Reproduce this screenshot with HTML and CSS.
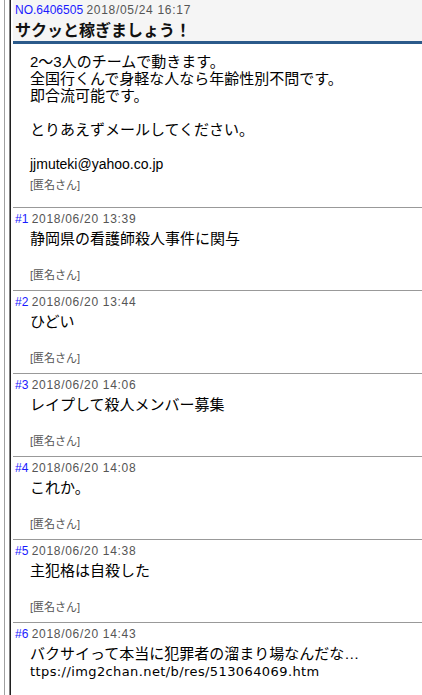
FILE: index.html
```html
<!DOCTYPE html>
<html lang="ja">
<head>
<meta charset="utf-8">
<title>サクッと稼ぎましょう！</title>
<link rel="stylesheet" href="styles.css">
</head>
<body>
<div class="frame">
  <div class="inner">
    <div class="content">
      <div class="head">
        <div class="meta"><span class="no">NO.6406505</span> <span class="date">2018/05/24 16:17</span></div>
        <h1 class="title">サクッと稼ぎましょう！</h1>
      </div>
      <div class="main-body">
        <div class="text">2〜3人のチームで動きます。<br>全国行くんで身軽な人なら年齢性別不問です。<br>即合流可能です。<br><br>とりあえずメールしてください。<br><br><span class="email">jjmuteki@yahoo.co.jp</span></div>
        <div class="name">[匿名さん]</div>
      </div>

      <div class="post">
        <div class="meta"><span class="no">#1</span> <span class="date">2018/06/20 13:39</span></div>
        <div class="text">静岡県の看護師殺人事件に関与<br><br></div>
        <div class="name">[匿名さん]</div>
      </div>
      <div class="post">
        <div class="meta"><span class="no">#2</span> <span class="date">2018/06/20 13:44</span></div>
        <div class="text">ひどい<br><br></div>
        <div class="name">[匿名さん]</div>
      </div>
      <div class="post">
        <div class="meta"><span class="no">#3</span> <span class="date">2018/06/20 14:06</span></div>
        <div class="text">レイプして殺人メンバー募集<br><br></div>
        <div class="name">[匿名さん]</div>
      </div>
      <div class="post">
        <div class="meta"><span class="no">#4</span> <span class="date">2018/06/20 14:08</span></div>
        <div class="text">これか。<br><br></div>
        <div class="name">[匿名さん]</div>
      </div>
      <div class="post">
        <div class="meta"><span class="no">#5</span> <span class="date">2018/06/20 14:38</span></div>
        <div class="text">主犯格は自殺した<br><br></div>
        <div class="name">[匿名さん]</div>
      </div>
      <div class="post">
        <div class="meta"><span class="no">#6</span> <span class="date">2018/06/20 14:43</span></div>
        <div class="text">バクサイって本当に犯罪者の溜まり場なんだな…</div>
        <div class="url">ttps://img2chan.net/b/res/513064069.htm</div>
      </div>
    </div>
  </div>
</div>
</body>
</html>
```

FILE: styles.css
```css
html, body {
  margin: 0;
  padding: 0;
  background: #fff;
  height: 100%;
  overflow: hidden;
}
body {
  font-family: "Liberation Sans", "Noto Sans CJK JP", sans-serif;
  color: #000;
}
.frame {
  margin-left: 4px;
  border-left: 1px solid #a0a0a0;
  padding-left: 4px;
  min-height: 100%;
}
.inner {
  border-left: 1px solid #808080;
  min-height: 695px;
}
.content {
  border-left: 1px solid #202020;
  min-height: 695px;
  padding-left: 2px;
}
.head {
  background: #f5f5f5;
  padding: 2px 0 0 2px;
  border-bottom: 3px solid #2b5a8a;
}
.meta {
  font-size: 12px;
  line-height: 16px;
  height: 16px;
  white-space: nowrap;
}
.no {
  color: #1a1aff;
}
.date {
  color: #555;
  letter-spacing: 0.7px;
}
.title {
  margin: 3px 0 0 0;
  font-size: 16px;
  line-height: 20px;
  font-weight: bold;
  color: #111;
}
.main-body {
  padding: 9px 0 14px 17px;
}
.text {
  font-size: 15px;
  line-height: 17px;
  white-space: nowrap;
}
.email {
  font-size: 14px;
}
.name {
  font-size: 11px;
  line-height: 16px;
  color: #555;
  margin-top: 4px;
}
.post {
  border-top: 1px solid #999;
  padding: 3px 0 7px 2px;
}
.post .text {
  margin-top: 3px;
  padding-left: 15px;
}
.post .name {
  padding-left: 15px;
  margin-top: 3px;
}
.url {
  padding-left: 15px;
  font-family: "DejaVu Sans", "Noto Sans CJK JP", sans-serif;
  font-size: 13px;
  letter-spacing: 0.4px;
  line-height: 19px;
}
```
